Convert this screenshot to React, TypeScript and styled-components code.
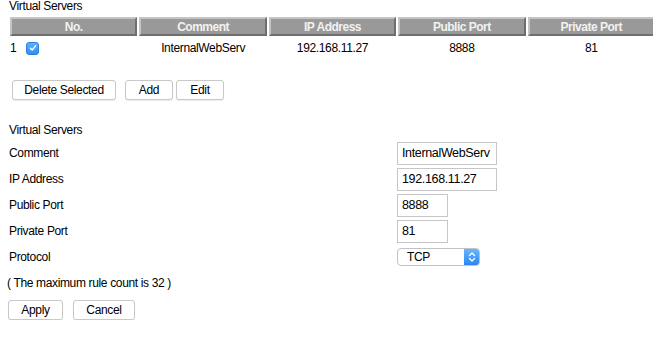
import React from "react";
import styled, { createGlobalStyle } from "styled-components";

const GlobalStyle = createGlobalStyle`
  html, body {
    margin: 0;
    padding: 0;
    background: #fff;
  }
  body {
    font-family: "Liberation Sans", Arial, sans-serif;
    font-size: 12px;
    letter-spacing: -0.35px;
    color: #000;
  }
`;

const Page = styled.div`
  width: 653px;
  padding: 0 0 0 8px;
  box-sizing: border-box;
`;

const SectionTitle = styled.div`
  height: 15px;
  line-height: 13px;
  padding-left: 1px;
`;

const Table = styled.table`
  border-collapse: separate;
  border-spacing: 2px;
  table-layout: fixed;
  width: 649px;
`;

const HeadCell = styled.th`
  height: 19px;
  padding: 0;
  box-sizing: border-box;
  background: #999;
  color: #f2f2f2;
  font-weight: bold;
  font-size: 12px;
  letter-spacing: -0.5px;
  text-align: center;
  border-top: 2px solid #c4c4c4;
  border-left: 2px solid #c4c4c4;
  border-bottom: 2px solid #6e6e6e;
  border-right: 2px solid #6e6e6e;
`;

const Cell = styled.td<{ $left?: boolean }>`
  height: 20px;
  padding: 0;
  text-align: ${(p) => (p.$left ? "left" : "center")};
  vertical-align: middle;
`;

const RowNo = styled.span`
  display: inline-flex;
  align-items: center;
  gap: 10px;
`;

const CheckBox = styled.span`
  display: inline-flex;
  align-items: center;
  justify-content: center;
  width: 13px;
  height: 13px;
  border-radius: 3px;
  background: linear-gradient(#5cb0ff, #2f8ff5);
  border: 1px solid #2a7fdc;
  box-sizing: border-box;
`;

const ButtonBar = styled.div<{ $top: number }>`
  display: flex;
  align-items: center;
  margin-top: ${(p) => p.$top}px;
`;

const Button = styled.button<{ $w: number; $gap?: number }>`
  width: ${(p) => p.$w}px;
  height: 20px;
  margin-left: ${(p) => p.$gap ?? 0}px;
  padding: 0;
  background: #fff;
  border: 1px solid #c8c8c8;
  border-radius: 3px;
  box-shadow: 0 1px 1px rgba(0, 0, 0, 0.08);
  font-family: "Liberation Sans", Arial, sans-serif;
  font-size: 12px;
  letter-spacing: -0.35px;
  color: #000;
`;

const FormTitle = styled.div`
  margin-top: 20px;
  height: 20px;
  line-height: 20px;
  padding-left: 1px;
`;

const Form = styled.div`
  display: grid;
  grid-template-columns: 389px 1fr;
  grid-auto-rows: 26px;
  align-items: center;
`;

const Label = styled.div`
  padding-left: 1px;
`;

const Input = styled.div<{ $w: number }>`
  width: ${(p) => p.$w}px;
  height: 23px;
  box-sizing: border-box;
  border: 1px solid #c6c6c6;
  padding: 0 4px;
  line-height: 21px;
  font-size: 12.5px;
  white-space: nowrap;
  overflow: hidden;
`;

const Select = styled.div`
  display: flex;
  width: 83px;
  height: 18px;
  box-sizing: border-box;
  border: 1px solid #c2c2c2;
  border-radius: 4px;
  overflow: hidden;
  background: #fff;
`;

const SelectValue = styled.div`
  flex: 1;
  padding-left: 9px;
  line-height: 16px;
`;

const SelectArrow = styled.div`
  width: 15px;
  background: linear-gradient(#6ab6ff, #2a86f2);
  display: flex;
  align-items: center;
  justify-content: center;
`;

const Note = styled.div`
  margin-top: 6px;
  margin-left: -1px;
  height: 14px;
  line-height: 14px;
`;

const App: React.FC = () => (
  <Page>
    <GlobalStyle />
    <SectionTitle>Virtual Servers</SectionTitle>
    <Table>
      <thead>
        <tr>
          <HeadCell>No.</HeadCell>
          <HeadCell>Comment</HeadCell>
          <HeadCell>IP Address</HeadCell>
          <HeadCell>Public Port</HeadCell>
          <HeadCell>Private Port</HeadCell>
        </tr>
      </thead>
      <tbody>
        <tr>
          <Cell $left>
            <RowNo>
              1
              <CheckBox>
                <svg width="8" height="8" viewBox="0 0 8 8">
                  <path d="M1.3 4.2 L3.2 6 L6.7 1.8" stroke="#fff" strokeWidth="1.4" fill="none" strokeLinecap="round" strokeLinejoin="round" />
                </svg>
              </CheckBox>
            </RowNo>
          </Cell>
          <Cell>InternalWebServ</Cell>
          <Cell>192.168.11.27</Cell>
          <Cell>8888</Cell>
          <Cell>81</Cell>
        </tr>
      </tbody>
    </Table>
    <ButtonBar $top={20}>
      <Button $w={104} $gap={4}>Delete Selected</Button>
      <Button $w={48} $gap={9}>Add</Button>
      <Button $w={48} $gap={3}>Edit</Button>
    </ButtonBar>
    <FormTitle>Virtual Servers</FormTitle>
    <Form>
      <Label>Comment</Label>
      <Input $w={100}>InternalWebServ</Input>
      <Label>IP Address</Label>
      <Input $w={100}>192.168.11.27</Input>
      <Label>Public Port</Label>
      <Input $w={51}>8888</Input>
      <Label>Private Port</Label>
      <Input $w={51}>81</Input>
      <Label>Protocol</Label>
      <Select>
        <SelectValue>TCP</SelectValue>
        <SelectArrow>
          <svg width="8" height="12" viewBox="0 0 8 12">
            <path d="M1.5 4.5 L4 2 L6.5 4.5 M1.5 7.5 L4 10 L6.5 7.5" stroke="#fff" strokeWidth="1.3" fill="none" strokeLinecap="round" strokeLinejoin="round" />
          </svg>
        </SelectArrow>
      </Select>
    </Form>
    <Note>( The maximum rule count is 32 )</Note>
    <ButtonBar $top={10}>
      <Button $w={55}>Apply</Button>
      <Button $w={62} $gap={10}>Cancel</Button>
    </ButtonBar>
  </Page>
);

export default App;
